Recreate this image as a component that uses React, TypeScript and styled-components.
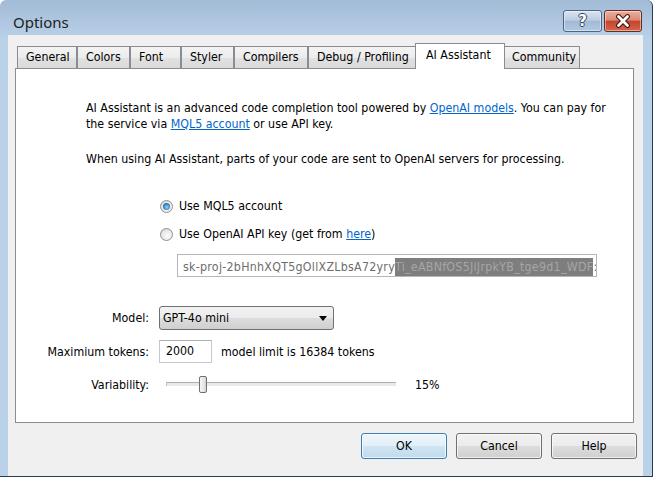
import React from 'react';
import styled, { createGlobalStyle, css } from 'styled-components';

const GlobalStyle = createGlobalStyle`
  html, body { margin: 0; padding: 0; background: #fff; }
  body {
    font-family: "DejaVu Sans Condensed", "DejaVu Sans", sans-serif;
    font-size: 12.3px;
    color: #000;
  }
`;

const Window = styled.div`
  width: 653px;
  height: 477px;
  box-sizing: border-box;
  display: flex;
  flex-direction: column;
  border-right: 1px solid #263f50;
  border-bottom: 1px solid #263f50;
  border-top-left-radius: 6px;
  border-top-right-radius: 6px;
  background: linear-gradient(180deg, #a2bbd6 0px, #b3cae3 28px, #bad1ea 40px, #bad1ea 100%);
`;

const TitleBar = styled.div`
  height: 35px;
  display: flex;
  align-items: flex-start;
  justify-content: space-between;
  padding: 0 10px 0 13px;
`;

const Title = styled.div`
  font-family: "Noto Sans", "Open Sans", sans-serif;
  font-size: 15px;
  line-height: 20px;
  margin-top: 12px;
  color: #222;
`;

const CaptionButtons = styled.div`
  display: flex;
  gap: 2px;
  margin-top: 10px;
`;

const CaptionButton = styled.div<{ $close?: boolean }>`
  width: ${(p) => (p.$close ? 38 : 39)}px;
  height: 22px;
  box-sizing: border-box;
  border-radius: 3px;
  display: flex;
  align-items: center;
  justify-content: center;
  border: 1px solid ${(p) => (p.$close ? '#6a2a1e' : '#4c6584')};
  box-shadow: inset 0 0 0 1px rgba(255, 255, 255, 0.45);
  background: ${(p) =>
    p.$close
      ? 'linear-gradient(180deg, #eab0a2 0%, #d98a76 45%, #c4442c 52%, #d4674a 100%)'
      : 'linear-gradient(180deg, #d9e4f1 0%, #bccde2 45%, #a3b9d5 52%, #b1c8e1 100%)'};
  font-family: "DejaVu Sans", sans-serif;
  font-weight: bold;
  font-size: 15px;
  color: #fff;
  text-shadow: 1px 0 0 #33465f, -1px 0 0 #33465f, 0 1px 0 #33465f, 0 -1px 0 #33465f;
`;

const Client = styled.div`
  flex: 1;
  margin: 0 9px 0 8px;
  background: #f0f0f0;
  display: flex;
  flex-direction: column;
  padding: 8px 9px 0 7px;
`;

const TabStrip = styled.div`
  display: flex;
  align-items: flex-end;
  height: 25px;
  padding-left: 2px;
`;

const Tab = styled.div<{ $w: number; $active?: boolean }>`
  width: ${(p) => p.$w}px;
  height: 22px;
  box-sizing: border-box;
  border: 1px solid #898c95;
  border-bottom: none;
  padding-left: 8px;
  line-height: 21px;
  white-space: nowrap;
  background: linear-gradient(180deg, #f3f3f3 0%, #ececec 50%, #e1e1e1 51%, #dadada 100%);
  ${(p) =>
    p.$active &&
    css`
      width: ${p.$w + 4}px;
      margin: 0 -2px -1px;
      height: 26px;
      padding-left: 10px;
      line-height: 22px;
      background: #fff;
      position: relative;
      z-index: 1;
    `}
`;

const Panel = styled.div`
  height: 355px;
  box-sizing: border-box;
  border: 1px solid #898c95;
  background: #fff;
  display: flex;
  flex-direction: column;
`;

const Para = styled.p<{ $top: number }>`
  margin: ${(p) => p.$top}px 0 0 70px;
  line-height: 16px;
`;

const Link = styled.a`
  color: #0066cc;
  text-decoration: underline;
`;

const RadioRow = styled.label<{ $top: number }>`
  display: flex;
  align-items: center;
  gap: 6px;
  height: 16px;
  margin: ${(p) => p.$top}px 0 0 144px;
`;

const Radio = styled.span<{ $checked?: boolean }>`
  width: 13px;
  height: 13px;
  box-sizing: border-box;
  border-radius: 50%;
  border: 1px solid #8e8f8f;
  background: radial-gradient(circle at 60% 65%, #fbfbfb 0%, #e9e9e9 55%, #c9c9c9 100%);
  display: flex;
  align-items: center;
  justify-content: center;
  ${(p) =>
    p.$checked &&
    css`
      &::after {
        content: '';
        width: 7px;
        height: 7px;
        border-radius: 50%;
        background: radial-gradient(circle at 55% 60%, #9ad7f7 0%, #3a8cc4 50%, #17456b 100%);
      }
    `}
`;

const KeyInput = styled.div`
  margin: 12px 0 0 161px;
  width: 420px;
  height: 23px;
  box-sizing: border-box;
  border: 1px solid #b4b8bd;
  padding: 3px 0 0 5px;
  overflow: hidden;
  white-space: nowrap;
  color: #6d6d6d;
  line-height: 18px;
  letter-spacing: 0.28px;
`;

const Selection = styled.span`
  display: inline-block;
  background: #7e7e7e;
  color: #a6a6a6;
  line-height: 18px;
`;

const Row = styled.div<{ $top: number }>`
  display: flex;
  align-items: center;
  margin-top: ${(p) => p.$top}px;
`;

const Label = styled.div`
  width: 133px;
  text-align: right;
  margin-right: 10px;
`;

const Select = styled.div`
  width: 175px;
  height: 24px;
  box-sizing: border-box;
  border: 1px solid #707070;
  border-radius: 3px;
  background: linear-gradient(180deg, #f2f2f2 0%, #ebebeb 50%, #dddddd 51%, #cfcfcf 100%);
  display: flex;
  align-items: center;
  justify-content: space-between;
  padding: 0 6px 0 3px;
`;

const Arrow = styled.span`
  width: 0;
  height: 0;
  border-left: 4px solid transparent;
  border-right: 4px solid transparent;
  border-top: 5px solid #000;
`;

const NumInput = styled.div`
  width: 53px;
  height: 23px;
  box-sizing: border-box;
  border: 1px solid #c5c9ce;
  border-top-color: #abadb3;
  padding-left: 6px;
  line-height: 21px;
`;

const Hint = styled.span`
  margin-left: 9px;
`;

const Slider = styled.div`
  position: relative;
  width: 230px;
  height: 17px;
  margin-left: 7px;
`;

const Track = styled.div`
  position: absolute;
  left: 0;
  right: 0;
  top: 6px;
  height: 4px;
  box-sizing: border-box;
  border-top: 1px solid #b0b0b0;
  border-left: 1px solid #c0c0c0;
  background: #e7eaea;
`;

const Thumb = styled.div`
  position: absolute;
  top: 0;
  width: 8px;
  height: 17px;
  box-sizing: border-box;
  border: 1px solid #707070;
  border-radius: 2px;
  background: linear-gradient(90deg, #f6f6f6 0%, #e6e6e6 60%, #d4d4d4 100%);
`;

const Percent = styled.span`
  margin-left: 19px;
`;

const Footer = styled.div`
  display: flex;
  justify-content: flex-end;
  gap: 9px;
  margin-top: 10px;
  margin-right: -3px;
`;

const Button = styled.div<{ $default?: boolean }>`
  width: 86px;
  height: 26px;
  box-sizing: border-box;
  border: 1px solid ${(p) => (p.$default ? '#3c7fb1' : '#707070')};
  border-radius: 3px;
  box-shadow: inset 0 0 0 1px rgba(255, 255, 255, 0.7);
  background: ${(p) =>
    p.$default
      ? 'linear-gradient(180deg, #eef6fb 0%, #e1eff8 50%, #cfe5f2 51%, #c0dbec 100%)'
      : 'linear-gradient(180deg, #f2f2f2 0%, #ebebeb 50%, #dddddd 51%, #cfcfcf 100%)'};
  display: flex;
  align-items: center;
  justify-content: center;
`;

const tabs: [string, number][] = [
  ['General', 60],
  ['Colors', 53],
  ['Font', 51],
  ['Styler', 53],
  ['Compilers', 74],
  ['Debug / Profiling', 109],
  ['AI Assistant', 86],
  ['Community', 77],
];

// thumb offset inside the 230px track for 15%
const sliderPos = 33;

function CloseGlyph() {
  return (
    <svg width="16" height="14" viewBox="0 0 16 14">
      <path d="M3.5 2.5 L12.5 11.5 M12.5 2.5 L3.5 11.5" stroke="#4a1a12" strokeWidth="5" strokeLinecap="round" />
      <path d="M3.5 2.5 L12.5 11.5 M12.5 2.5 L3.5 11.5" stroke="#fff" strokeWidth="2.8" strokeLinecap="round" />
    </svg>
  );
}

export default function App() {
  return (
    <>
      <GlobalStyle />
      <Window>
        <TitleBar>
          <Title>Options</Title>
          <CaptionButtons>
            <CaptionButton>?</CaptionButton>
            <CaptionButton $close>
              <CloseGlyph />
            </CaptionButton>
          </CaptionButtons>
        </TitleBar>
        <Client>
          <TabStrip>
            {tabs.map(([name, w]) => (
              <Tab key={name} $w={w} $active={name === 'AI Assistant'}>
                {name}
              </Tab>
            ))}
          </TabStrip>
          <Panel>
            <Para $top={31}>
              AI Assistant is an advanced code completion tool powered by <Link>OpenAI models</Link>. You can pay for
              <br />
              the service via <Link>MQL5 account</Link> or use API key.
            </Para>
            <Para $top={19}>When using AI Assistant, parts of your code are sent to OpenAI servers for processing.</Para>
            <RadioRow $top={31}>
              <Radio $checked />
              Use MQL5 account
            </RadioRow>
            <RadioRow $top={12}>
              <Radio />
              <span>
                Use OpenAI API key (get from <Link>here</Link>)
              </span>
            </RadioRow>
            <KeyInput>
              sk-proj-2bHnhXQT5gOllXZLbsA72yry<Selection>Ti_eABNfOS5JiJrpkYB_tge9d1_WDF</Selection>:
            </KeyInput>
            <Row $top={29}>
              <Label>Model:</Label>
              <Select>
                GPT-4o mini
                <Arrow />
              </Select>
            </Row>
            <Row $top={10}>
              <Label>Maximium tokens:</Label>
              <NumInput>2000</NumInput>
              <Hint>model limit is 16384 tokens</Hint>
            </Row>
            <Row $top={13}>
              <Label>Variability:</Label>
              <Slider>
                <Track />
                <Thumb style={{ left: sliderPos }} />
              </Slider>
              <Percent>15%</Percent>
            </Row>
          </Panel>
          <Footer>
            <Button $default>OK</Button>
            <Button>Cancel</Button>
            <Button>Help</Button>
          </Footer>
        </Client>
      </Window>
    </>
  );
}
